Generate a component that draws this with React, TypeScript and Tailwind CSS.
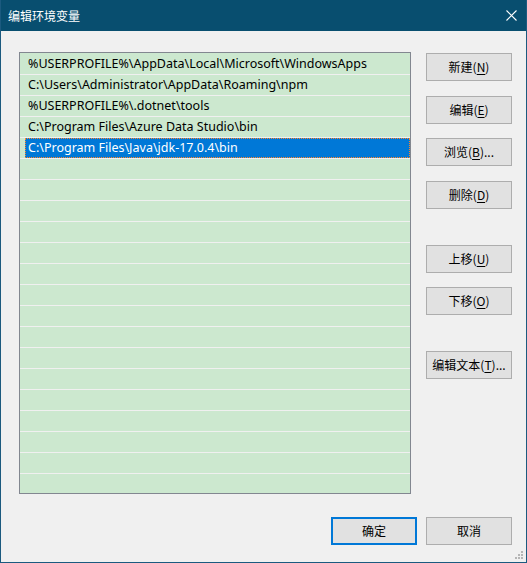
import React from "react";

const rows = [
  "%USERPROFILE%\\AppData\\Local\\Microsoft\\WindowsApps",
  "C:\\Users\\Administrator\\AppData\\Roaming\\npm",
  "%USERPROFILE%\\.dotnet\\tools",
  "C:\\Program Files\\Azure Data Studio\\bin",
  "C:\\Program Files\\Java\\jdk-17.0.4\\bin",
];

const cjk = { fontFamily: '"Noto Sans CJK SC", "Noto Sans", sans-serif' };
const latin = { fontFamily: '"Noto Sans", "Noto Sans CJK SC", sans-serif' };

function Btn({ label, k, suffix = "", mt, primary = false }: { label: string; k?: string; suffix?: string; mt?: string; primary?: boolean }) {
  return (
    <div
      className={`w-[86px] h-[28px] flex items-center justify-center bg-[#e1e1e1] text-[12px] text-black leading-none ${primary ? "border-2 border-[#0078d7]" : "border border-[#adadad]"} ${mt ?? ""}`}
      style={cjk}
    >
      <span>
        {label}
        {k ? (
          <>
            (<span className="underline underline-offset-2">{k}</span>)
          </>
        ) : null}
        {suffix}
      </span>
    </div>
  );
}

export default function App() {
  const all = [...rows, ...Array(16).fill("")];
  return (
    <div className="w-[527px] h-[563px] flex flex-col bg-[#f0f0f0] border-x border-b border-[#1b5a7f] relative overflow-hidden">
      <div className="h-[31px] shrink-0 bg-[#084e6f] flex items-center justify-between pl-[8px] pr-[9px] -mx-px">
        <span className="text-white text-[12px] leading-none" style={cjk}>编辑环境变量</span>
        <svg width="11" height="11" viewBox="0 0 11 11" className="mr-[1px]">
          <path d="M0.5 0.5 L10.5 10.5 M10.5 0.5 L0.5 10.5" stroke="white" strokeWidth="1.1" />
        </svg>
      </div>
      <div className="flex-1 flex flex-col pl-[18px] pt-[21px]">
        <div className="flex">
          <div className="w-[392px] h-[442px] border border-[#828790] bg-[#cce8cf] overflow-hidden pt-[1px]">
            {all.map((t, i) => (
              <div key={i} className="h-[21px] border-b border-[#f0f0f0] flex items-stretch">
                {i === 4 ? (
                  <div className="ml-[5px] flex-1 bg-[#0078d7] border border-dotted border-[#ff8728] flex items-center pl-[2px] pt-[1px] text-white text-[12.5px] leading-none" style={latin}>
                    {t}
                  </div>
                ) : (
                  <div className="ml-[8px] flex items-center pt-[1px] text-[12.5px] text-black leading-none" style={latin}>
                    {t}
                  </div>
                )}
              </div>
            ))}
          </div>
          <div className="ml-[15px] flex flex-col">
            <Btn label="新建" k="N" mt="mt-[1px]" />
            <Btn label="编辑" k="E" mt="mt-[15px]" />
            <Btn label="浏览" k="B" suffix="..." mt="mt-[14px]" />
            <Btn label="删除" k="D" mt="mt-[15px]" />
            <Btn label="上移" k="U" mt="mt-[36px]" />
            <Btn label="下移" k="O" mt="mt-[14px]" />
            <Btn label="编辑文本" k="T" suffix="..." mt="mt-[36px]" />
          </div>
        </div>
        <div className="flex justify-end gap-[9px] pr-[14px] mt-[23px]">
          <Btn label="确定" primary />
          <Btn label="取消" />
        </div>
      </div>
      <svg className="absolute right-[2px] bottom-[2px]" width="10" height="10" viewBox="0 0 10 10">
        <rect x="7" y="1" width="2" height="2" fill="#b5b5b5" />
        <rect x="4" y="4" width="2" height="2" fill="#b5b5b5" />
        <rect x="7" y="4" width="2" height="2" fill="#b5b5b5" />
        <rect x="1" y="7" width="2" height="2" fill="#b5b5b5" />
        <rect x="4" y="7" width="2" height="2" fill="#b5b5b5" />
        <rect x="7" y="7" width="2" height="2" fill="#b5b5b5" />
      </svg>
    </div>
  );
}
